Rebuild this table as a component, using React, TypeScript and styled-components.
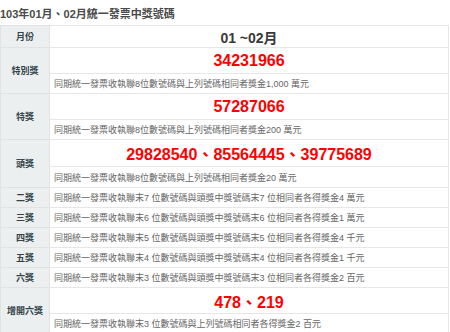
import React from "react";
import styled, { createGlobalStyle } from "styled-components";

const Global = createGlobalStyle`
  html, body { margin: 0; padding: 0; background: #fff; }
  body { font-family: "Liberation Sans", "Noto Sans CJK TC", sans-serif; }
`;

const Page = styled.div`
  width: 450px;
`;

const Title = styled.h2`
  margin: 0;
  height: 25px;
  padding: 8px 0 0 0;
  box-sizing: border-box;
  font-size: 11px;
  line-height: 13px;
  font-weight: bold;
  color: #4a4a4a;
`;

const Table = styled.table`
  width: 449px;
  border-collapse: collapse;
  table-layout: fixed;
  border: 1px solid #e2e2e2;
`;

const Label = styled.th`
  width: 48px;
  background: #ebefef;
  color: #34434a;
  font-size: 9px;
  font-weight: bold;
  text-align: center;
  vertical-align: middle;
  border: 1px solid #e2e2e2;
  padding: 0;
`;

const Cell = styled.td<{ $h: number }>`
  height: ${(p) => p.$h}px;
  padding: 0;
  border: 1px solid #e6e6e6;
  box-sizing: border-box;
`;

const Month = styled(Cell)`
  text-align: center;
  font-size: 14px;
  font-weight: bold;
  color: #3a3a3a;
`;

const Number = styled(Cell)`
  text-align: center;
  font-size: 16px;
  font-weight: bold;
  color: #ff0000;
`;

const Desc = styled(Cell)`
  padding-left: 4px;
  font-size: 9px;
  color: #666;
  white-space: nowrap;
`;

type Big = { label: string; nums: string; desc: string; nh: number; dh: number };

const big: Big[] = [
  { label: "特別獎", nums: "34231966", desc: "同期統一發票收執聯8位數號碼與上列號碼相同者獎金1,000 萬元", nh: 26, dh: 20 },
  { label: "特獎", nums: "57287066", desc: "同期統一發票收執聯8位數號碼與上列號碼相同者獎金200 萬元", nh: 26, dh: 20 },
  { label: "頭獎", nums: "29828540、85564445、39775689", desc: "同期統一發票收執聯8位數號碼與上列號碼相同者獎金20 萬元", nh: 27, dh: 21 },
];

const small = [
  { label: "二獎", n: "7", prize: "4 萬元" },
  { label: "三獎", n: "6", prize: "1 萬元" },
  { label: "四獎", n: "5", prize: "4 千元" },
  { label: "五獎", n: "4", prize: "1 千元" },
  { label: "六獎", n: "3", prize: "2 百元" },
];

export default function App() {
  return (
    <Page>
      <Global />
      <Title>103年01月、02月統一發票中獎號碼</Title>
      <Table>
        <tbody>
          <tr>
            <Label>月份</Label>
            <Month $h={22}>01 ~02月</Month>
          </tr>
          {big.map((b) => (
            <React.Fragment key={b.label}>
              <tr>
                <Label rowSpan={2}>{b.label}</Label>
                <Number $h={b.nh}>{b.nums}</Number>
              </tr>
              <tr>
                <Desc $h={b.dh}>{b.desc}</Desc>
              </tr>
            </React.Fragment>
          ))}
          {small.map((s) => (
            <tr key={s.label}>
              <Label>{s.label}</Label>
              <Desc $h={20}>
                同期統一發票收執聯末{s.n} 位數號碼與頭獎中獎號碼末{s.n} 位相同者各得獎金{s.prize}
              </Desc>
            </tr>
          ))}
          <tr>
            <Label rowSpan={2}>增開六獎</Label>
            <Number $h={26}>478、219</Number>
          </tr>
          <tr>
            <Desc $h={20}>同期統一發票收執聯末3 位數號碼與上列號碼相同者各得獎金2 百元</Desc>
          </tr>
        </tbody>
      </Table>
    </Page>
  );
}
